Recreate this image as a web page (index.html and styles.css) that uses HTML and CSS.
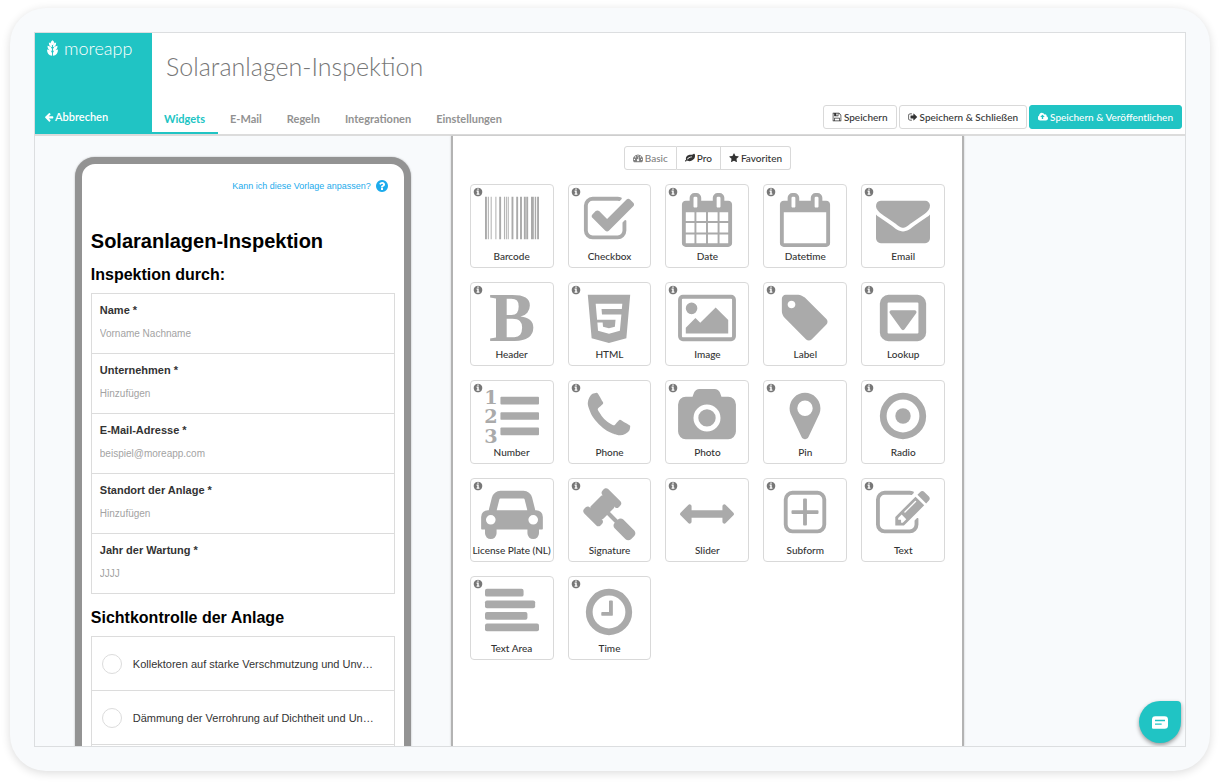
FILE: index.html
```html
<!DOCTYPE html>
<html lang="de">
<head>
<meta charset="utf-8">
<meta name="viewport" content="width=device-width, initial-scale=1">
<title>Solaranlagen-Inspektion</title>
<link rel="stylesheet" href="styles.css">
</head>
<body>
<svg class="defs" aria-hidden="true">
  <symbol id="info" viewBox="0 0 1792 1792"><path d="M1152 1376v-160q0-14-9-23t-23-9h-96v-512q0-14-9-23t-23-9h-320q-14 0-23 9t-9 23v160q0 14 9 23t23 9h96v320h-96q-14 0-23 9t-9 23v160q0 14 9 23t23 9h448q14 0 23-9t9-23zm-128-896v-160q0-14-9-23t-23-9h-192q-14 0-23 9t-9 23v160q0 14 9 23t23 9h192q14 0 23-9t9-23zm640 416q0 209-103 385.5t-279.5 279.5-385.5 103-385.5-103-279.5-279.5-103-385.5 103-385.5 279.5-279.5 385.5-103 385.5 103 279.5 279.5 103 385.5z"/></symbol>
</svg>
<div class="device">
  <div class="app">
    <header class="header">
      <div class="brand">
        <a class="logo" href="#">
          <svg class="logo-mark" viewBox="0 0 24 34" aria-hidden="true"><path d="M12 0c3 2 4 4 4 6s-2 4-4 5c-2-1-4-3-4-5s1-4 4-6zM4 5c4 1 7 3 7 8v2c-4 0-7-3-7-10zm16 0c-4 1-7 3-7 8v2c4 0 7-3 7-10zM1 12c6 1 10 4 10 9v2c-6 0-10-4-10-11zm22 0c-6 1-10 4-10 9v2c6 0 10-4 10-11zM0 20c7 1 11 4 11 9v5C4 33 0 28 0 20zm24 0c-7 1-11 4-11 9v5c7-1 11-6 11-14z"/></svg>
          <span>moreapp</span>
        </a>
        <a class="cancel" href="#">
          <svg viewBox="0 0 1792 1792" aria-hidden="true"><path d="M1664 896v128q0 53-32.5 90.5t-84.5 37.5h-704l293 294q38 36 38 90t-38 90l-75 76q-37 37-90 37-52 0-91-37l-651-652q-37-37-37-90 0-52 37-91l651-650q38-38 91-38 52 0 90 38l75 74q38 38 38 91t-38 91l-293 293h704q52 0 84.5 37.5t32.5 90.5z"/></svg>
          <span>Abbrechen</span>
        </a>
      </div>
      <div class="header-main">
        <h1 class="title">Solaranlagen-Inspektion</h1>
        <div class="header-row">
          <nav class="tabs">
            <a class="tab tab-active" href="#">Widgets</a>
            <a class="tab" href="#">E-Mail</a>
            <a class="tab" href="#">Regeln</a>
            <a class="tab" href="#">Integrationen</a>
            <a class="tab" href="#">Einstellungen</a>
          </nav>
          <div class="actions">
            <button class="btn" type="button"><svg class="icon" viewBox="0 0 1792 1792" aria-hidden="true"><path d="M512 1536h768v-384h-768v384zm896 0h128v-896q0-14-10-38.5t-20-34.5l-281-281q-10-10-34-20t-39-10v416q0 40-28 68t-68 28h-576q-40 0-68-28t-28-68v-416h-128v1280h128v-416q0-40 28-68t68-28h832q40 0 68 28t28 68v416zm-384-928v-320q0-13-9.5-22.5t-22.5-9.5h-192q-13 0-22.5 9.5t-9.5 22.5v320q0 13 9.5 22.5t22.5 9.5h192q13 0 22.5-9.5t9.5-22.5zm640 32v928q0 40-28 68t-68 28h-1344q-40 0-68-28t-28-68v-1344q0-40 28-68t68-28h928q40 0 88 20t76 48l280 280q28 28 48 76t20 88z"/></svg><span>Speichern</span></button>
            <button class="btn" type="button"><svg class="icon" viewBox="0 0 1792 1792" aria-hidden="true"><path d="M704 1440q0 4 1 20t.5 26.5-3 23.5-10 19.5-20.5 6.5h-320q-119 0-203.5-84.5t-84.5-203.5v-704q0-119 84.5-203.5t203.5-84.5h320q13 0 22.5 9.5t9.5 22.5q0 4 1 20t.5 26.5-3 23.5-10 19.5-20.5 6.5h-320q-66 0-113 47t-47 113v704q0 66 47 113t113 47h312l11.5 1 11.5 3 8 5.5 7 9 2 13.5zm928-544q0 26-19 45l-544 544q-19 19-45 19t-45-19-19-45v-288h-448q-26 0-45-19t-19-45v-384q0-26 19-45t45-19h448v-288q0-26 19-45t45-19 45 19l544 544q19 19 19 45z"/></svg><span>Speichern &amp; Schließen</span></button>
            <button class="btn btn-primary" type="button"><svg class="icon" viewBox="0 0 1856 1792" aria-hidden="true"><path d="M1216 864q0-14-9-23l-352-352q-9-9-23-9t-23 9l-351 351q-10 12-10 24 0 14 9 23t23 9h224v352q0 13 9.5 22.5t22.5 9.5h192q13 0 22.5-9.5t9.5-22.5v-352h224q13 0 22.5-9.5t9.5-22.5zm640 288q0 159-112.5 271.5t-271.5 112.5h-1088q-185 0-316.5-131.5t-131.5-316.5q0-130 70-240t188-165q-2-30-2-43 0-212 150-362t362-150q156 0 285.5 87t188.5 231q71-62 166-62 106 0 181 75t75 181q0 76-41 138 130 31 213.5 135.5t83.5 238.5z"/></svg><span>Speichern &amp; Veröffentlichen</span></button>
          </div>
        </div>
      </div>
    </header>

    <main class="workspace">
      <section class="preview">
        <form class="phone">
          <a class="help" href="#"><span>Kann ich diese Vorlage anpassen?</span>
            <svg viewBox="128 128 1536 1536" aria-hidden="true"><path d="M1024 1376v-192q0-14-9-23t-23-9h-192q-14 0-23 9t-9 23v192q0 14 9 23t23 9h192q14 0 23-9t9-23zm256-672q0-88-55.5-163t-138.5-116-170-41q-243 0-371 213-15 24 8 42l132 100q7 6 19 6 16 0 25-12 53-68 86-92 34-24 86-24 48 0 85.5 26t37.5 59q0 38-20 61t-68 45q-63 28-115.5 86.5t-52.5 125.5v36q0 14 9 23t23 9h192q14 0 23-9t9-23q0-19 21.5-49.5t54.5-49.5q32-18 49-28.5t46-35 44.5-48 28-60.5 12.5-81zm384 192q0 209-103 385.5t-279.5 279.5-385.5 103-385.5-103-279.5-279.5-103-385.5 103-385.5 279.5-279.5 385.5-103 385.5 103 279.5 279.5 103 385.5z"/></svg>
          </a>
          <h2 class="form-title">Solaranlagen-Inspektion</h2>
          <h3 class="form-section">Inspektion durch:</h3>
          <div class="fields">
            <div class="field"><label for="name">Name *</label><input id="name" type="text" placeholder="Vorname Nachname"></div>
            <div class="field"><label for="firm">Unternehmen *</label><input id="firm" type="text" placeholder="Hinzufügen"></div>
            <div class="field"><label for="mail">E-Mail-Adresse *</label><input id="mail" type="email" placeholder="beispiel@moreapp.com"></div>
            <div class="field"><label for="site">Standort der Anlage *</label><input id="site" type="text" placeholder="Hinzufügen"></div>
            <div class="field"><label for="year">Jahr der Wartung *</label><input id="year" type="text" placeholder="JJJJ"></div>
          </div>
          <h3 class="form-section">Sichtkontrolle der Anlage</h3>
          <div class="fields">
            <label class="check"><input type="checkbox"><span>Kollektoren auf starke Verschmutzung und Unv…</span></label>
            <label class="check"><input type="checkbox"><span>Dämmung der Verrohrung auf Dichtheit und Un…</span></label>
            <label class="check"><input type="checkbox"></label>
          </div>
        </form>
      </section>

      <section class="palette">
        <div class="segments">
          <button class="segment segment-active" type="button"><svg class="icon" viewBox="0 0 1792 1792" aria-hidden="true"><path fill-rule="evenodd" d="M896 256a896 896 0 0 0-757 1376q18 32 53 32h1408q35 0 53-32A896 896 0 0 0 896 256zM256 1024a120 120 0 1 1 0 240 120 120 0 1 1 0-240zM448 576a120 120 0 1 1 0 240 120 120 0 1 1 0-240zM896 384a120 120 0 1 1 0 240 120 120 0 1 1 0-240zM1344 576a120 120 0 1 1 0 240 120 120 0 1 1 0-240zM1536 1024a120 120 0 1 1 0 240 120 120 0 1 1 0-240zM1004 703l90 24-101 382a190 190 0 1 1-90-24z"/></svg><span>Basic</span></button>
          <button class="segment" type="button"><svg class="icon" viewBox="0 0 1792 1792" aria-hidden="true"><path d="M1280 704q0-26-19-45t-45-19q-172 0-318 49.5t-259.5 134-235.5 219.5q-19 21-19 45 0 26 19 45t45 19q24 0 45-19 27-24 74-71t67-66q137-124 268.5-176t313.5-52q26 0 45-19t19-45zm512-198q0 95-20 193-46 224-184.5 383t-357.5 268q-214 108-438 108-148 0-286-47-15-5-88-42t-96-37q-16 0-39.5 32t-45 70-52.5 70-60 32q-43 0-63.5-17.5t-45.5-59.5q-2-4-6-11t-5.5-10-3-9.5-1.5-13.5q0-35 31-73.5t68-65.5 68-56 31-48q0-4-14-38t-16-44q-9-51-9-104 0-115 43.5-220t119-184.5 170.5-139 204-95.5q55-18 145-25.5t179.5-9 178.5-6 163.5-24 113.5-56.5l29.5-29.5 29.5-28 27-20 36.5-16 43.5-4.5q39 0 70.5 46t47.5 112 24 124 8 96z"/></svg><span>Pro</span></button>
          <button class="segment" type="button"><svg class="icon" viewBox="0 0 1792 1792" aria-hidden="true"><path d="M1728 647q0 22-26 48l-363 354 86 500q1 7 1 20 0 21-10.5 35.5t-30.5 14.5q-19 0-40-12l-449-236-449 236q-22 12-40 12-21 0-31.5-14.5t-10.5-35.5q0-6 2-20l86-500-364-354q-25-27-25-48 0-37 56-46l502-73 225-455q19-41 49-41t49 41l225 455 502 73q56 9 56 46z"/></svg><span>Favoriten</span></button>
        </div>

        <div class="widgets">
          <button class="widget" type="button"><svg class="info" aria-hidden="true"><use href="#info"/></svg><svg class="glyph" viewBox="0 0 1792 1792" aria-hidden="true"><path d="M0 128h63v1408H0zM94 128h32v1408H94zM189 128h31v1408h-31zM346 128h31v1408h-31zM471 128h63v1408h-63zM629 128h31v1408h-31zM692 128h31v1408h-31zM755 128h31v1408h-31zM880 128h63v1408h-63zM1036 128h63v1408h-63zM1163 128h63v1408h-63zM1290 128h63v1408h-63zM1369 128h63v1408h-63zM1526 128h94v1408h-94zM1651 128h47v1408h-47zM1729 128h63v1408h-63z"/></svg><span>Barcode</span></button>
          <button class="widget" type="button"><svg class="info" aria-hidden="true"><use href="#info"/></svg><svg class="glyph" viewBox="0 0 1792 1792" aria-hidden="true"><path d="M1472 930v318q0 119-84.5 203.5t-203.5 84.5h-832q-119 0-203.5-84.5t-84.5-203.5v-832q0-119 84.5-203.5t203.5-84.5h832q63 0 117 25 15 7 18 23 3 17-9 29l-49 49q-10 10-23 10-3 0-9-2-23-6-45-6h-832q-66 0-113 47t-47 113v832q0 66 47 113t113 47h832q66 0 113-47t47-113v-254q0-13 9-22l64-64q10-10 23-10 6 0 12 3 20 8 20 29zm231-489l-814 814q-24 24-57 24t-57-24l-430-430q-24-24-24-57t24-57l110-110q24-24 57-24t57 24l263 263 647-647q24-24 57-24t57 24l110 110q24 24 24 57t-24 57z"/></svg><span>Checkbox</span></button>
          <button class="widget" type="button"><svg class="info" aria-hidden="true"><use href="#info"/></svg><svg class="glyph" viewBox="0 0 1792 1792" aria-hidden="true"><path d="M192 1664h288v-288h-288v288zm352 0h320v-288h-320v288zm-352-352h288v-320h-288v320zm352 0h320v-320h-320v320zm-352-384h288v-288h-288v288zm736 736h320v-288h-320v288zm-384-736h320v-288h-320v288zm768 736h288v-288h-288v288zm-384-352h320v-320h-320v320zm-352-864v-288q0-13-9.5-22.5t-22.5-9.5h-64q-13 0-22.5 9.5t-9.5 22.5v288q0 13 9.5 22.5t22.5 9.5h64q13 0 22.5-9.5t9.5-22.5zm736 864h288v-320h-288v320zm-384-384h320v-288h-320v288zm384 0h288v-288h-288v288zm32-480v-288q0-13-9.5-22.5t-22.5-9.5h-64q-13 0-22.5 9.5t-9.5 22.5v288q0 13 9.5 22.5t22.5 9.5h64q13 0 22.5-9.5t9.5-22.5zm384-64v1280q0 52-38 90t-90 38h-1408q-52 0-90-38t-38-90v-1280q0-52 38-90t90-38h128v-96q0-66 47-113t113-47h64q66 0 113 47t47 113v96h384v-96q0-66 47-113t113-47h64q66 0 113 47t47 113v96h128q52 0 90 38t38 90z"/></svg><span>Date</span></button>
          <button class="widget" type="button"><svg class="info" aria-hidden="true"><use href="#info"/></svg><svg class="glyph" viewBox="0 0 1792 1792" aria-hidden="true"><path fill-rule="evenodd" d="M192 1664h1408v-1024h-1408zM576 448v-288q0-13-9.5-22.5t-22.5-9.5h-64q-13 0-22.5 9.5t-9.5 22.5v288q0 13 9.5 22.5t22.5 9.5h64q13 0 22.5-9.5t9.5-22.5zM1344 448v-288q0-13-9.5-22.5t-22.5-9.5h-64q-13 0-22.5 9.5t-9.5 22.5v288q0 13 9.5 22.5t22.5 9.5h64q13 0 22.5-9.5t9.5-22.5zM1728 384v1280q0 52-38 90t-90 38h-1408q-52 0-90-38t-38-90v-1280q0-52 38-90t90-38h128v-96q0-66 47-113t113-47h64q66 0 113 47t47 113v96h384v-96q0-66 47-113t113-47h64q66 0 113 47t47 113v96h128q52 0 90 38t38 90z"/></svg><span>Datetime</span></button>
          <button class="widget" type="button"><svg class="info" aria-hidden="true"><use href="#info"/></svg><svg class="glyph" viewBox="0 0 1792 1792" aria-hidden="true"><path d="M1792 710v794q0 66-47 113t-113 47h-1472q-66 0-113-47t-47-113v-794q44 49 101 87 362 246 497 345 57 42 92.5 65.5t94.5 48 110 24.5h2q51 0 110-24.5t94.5-48 92.5-65.5q170-123 498-345 57-39 100-87zm0-294q0 79-49 151t-122 123q-376 261-468 325-10 7-42.5 31t-54 38.5-52 32.5-57.5 27-50 9h-2q-23 0-50-9t-57.5-27-52-32.5-54-38.5-42.5-31q-91-64-262-182.5t-205-142.5q-62-42-117-115.5t-55-136.5q0-78 41.5-130t118.5-52h1472q65 0 112.5 47t47.5 113z"/></svg><span>Email</span></button>

          <button class="widget" type="button"><svg class="info" aria-hidden="true"><use href="#info"/></svg><svg class="glyph" viewBox="0 0 1792 1792" aria-hidden="true"><text class="glyph-letter" x="896" y="1648" text-anchor="middle">B</text></svg><span>Header</span></button>
          <button class="widget" type="button"><svg class="info" aria-hidden="true"><use href="#info"/></svg><svg class="glyph" viewBox="-192 0 1792 1792" aria-hidden="true"><path d="M1130 597l16-175h-884l47 534h612l-22 228-197 53-196-53-13-140h-175l22 278 362 100h4v-1l359-99 50-544h-644l-15-181h674zm-1130-469h1408l-128 1438-578 162-574-162z"/></svg><span>HTML</span></button>
          <button class="widget" type="button"><svg class="info" aria-hidden="true"><use href="#info"/></svg><svg class="glyph glyph-wide" viewBox="0 0 1920 1792" aria-hidden="true"><path d="M640 576q0 80-56 136t-136 56-136-56-56-136 56-136 136-56 136 56 56 136zm1024 384v448h-1408v-192l320-320 160 160 512-512zm96-704h-1600q-13 0-22.5 9.5t-9.5 22.5v1216q0 13 9.5 22.5t22.5 9.5h1600q13 0 22.5-9.5t9.5-22.5v-1216q0-13-9.5-22.5t-22.5-9.5zm160 32v1216q0 66-47 113t-113 47h-1600q-66 0-113-47t-47-113v-1216q0-66 47-113t113-47h1600q66 0 113 47t47 113z"/></svg><span>Image</span></button>
          <button class="widget" type="button"><svg class="info" aria-hidden="true"><use href="#info"/></svg><svg class="glyph" viewBox="0 0 1792 1792" aria-hidden="true"><path d="M576 448q0-53-37.5-90.5t-90.5-37.5-90.5 37.5-37.5 90.5 37.5 90.5 90.5 37.5 90.5-37.5 37.5-90.5zm1067 576q0 53-37 90l-491 492q-39 37-91 37-53 0-90-37l-715-716q-38-37-64.5-101t-26.5-117v-416q0-52 38-90t90-38h416q53 0 117 26.5t102 64.5l715 714q37 39 37 91z"/></svg><span>Label</span></button>
          <button class="widget" type="button"><svg class="info" aria-hidden="true"><use href="#info"/></svg><svg class="glyph" viewBox="0 0 1792 1792" aria-hidden="true"><path d="M1337 675q18 35-5 66l-384 532q-19 27-52 27t-52-27l-384-532q-23-31-5-66 17-35 57-35h768q40 0 57 35z"/><path fill-rule="evenodd" d="M416 128h960q119 0 203.500 84.500t84.500 203.500v960q0 119-84.500 203.500t-203.500 84.500h-960q-119 0-203.500-84.500t-84.500-203.500v-960q0-119 84.500-203.500t203.500-84.500zm0 256q-32 0-32 32v960q0 32 32 32h960q32 0 32-32v-960q0-32-32-32z"/></svg><span>Lookup</span></button>

          <button class="widget" type="button"><svg class="info" aria-hidden="true"><use href="#info"/></svg><svg class="glyph" viewBox="0 0 1792 1792" aria-hidden="true"><g class="glyph-digits" text-anchor="middle"><text x="200" y="508">1</text><text x="200" y="1144">2</text><text x="200" y="1776">3</text></g><rect x="512" y="256" width="1280" height="256" rx="32"/><rect x="512" y="768" width="1280" height="256" rx="32"/><rect x="512" y="1280" width="1280" height="256" rx="32"/></svg><span>Number</span></button>
          <button class="widget" type="button"><svg class="info" aria-hidden="true"><use href="#info"/></svg><svg class="glyph" viewBox="0 0 1792 1792" aria-hidden="true"><path d="M1600 1240q0 27-10 70.5t-21 68.500q-21 50-122 106-94 51-186 51-27 0-52.500-3.500t-57.500-12.500-47.500-14.500-55.500-20.500-49-18q-98-35-175-83-128-79-264.500-215.500t-215.500-264.500q-48-77-83-175-3-9-18-49t-20.500-55.500-14.500-47.500-12.500-57.500-3.500-52.500q0-92 51-186 56-101 106-122 25-11 68.500-21t70.500-10q14 0 21 3 18 6 53 76 11 19 30 54t35 63.500 31 53.500q3 4 17.500 25t21.500 35.500 7 28.500q0 20-28.500 50t-62 55-62 53-28.500 46q0 9 5 22.500t8.500 20.500 14 24 11.500 19q76 137 174 235t235 174q2 1 19 11.500t24 14 20.500 8.500 22.500 5q18 0 46-28.500t53-62 55-62 50-28.500q14 0 28.500 7t35.500 21.500 25 17.500q25 15 53.500 31t63.500 35 54 30q70 35 76 53 3 7 3 21z"/></svg><span>Phone</span></button>
          <button class="widget" type="button"><svg class="info" aria-hidden="true"><use href="#info"/></svg><svg class="glyph glyph-wide" viewBox="0 0 1920 1792" aria-hidden="true"><path d="M960 672q119 0 203.500 84.500t84.500 203.500-84.500 203.500-203.500 84.500-203.500-84.500-84.500-203.500 84.500-203.500 203.500-84.500zm704-416q106 0 181 75t75 181v896q0 106-75 181t-181 75h-1408q-106 0-181-75t-75-181v-896q0-106 75-181t181-75h224l51-136q19-49 69.500-84.500t103.500-35.500h512q53 0 103.500 35.500t69.500 84.500l51 136h224zm-704 1152q185 0 316.500-131.500t131.500-316.500-131.500-316.500-316.500-131.500-316.500 131.500-131.500 316.500 131.500 316.500 316.500 131.500z"/></svg><span>Photo</span></button>
          <button class="widget" type="button"><svg class="info" aria-hidden="true"><use href="#info"/></svg><svg class="glyph" viewBox="0 0 1792 1792" aria-hidden="true"><path d="M1152 640q0-106-75-181t-181-75-181 75-75 181 75 181 181 75 181-75 75-181zm256 0q0 109-33 179l-364 774q-16 33-47.500 52t-67.500 19-67.500-19-46.500-52l-365-774q-33-70-33-179 0-212 150-362t362-150 362 150 150 362z"/></svg><span>Pin</span></button>
          <button class="widget" type="button"><svg class="info" aria-hidden="true"><use href="#info"/></svg><svg class="glyph" viewBox="0 0 1792 1792" aria-hidden="true"><circle class="ring" cx="896" cy="896" r="656"/><circle cx="896" cy="896" r="256"/></svg><span>Radio</span></button>

          <button class="widget" type="button"><svg class="info" aria-hidden="true"><use href="#info"/></svg><svg class="glyph glyph-car" viewBox="0 0 2048 1792" aria-hidden="true"><path d="M480 1088q0-66-47-113t-113-47-113 47-47 113 47 113 113 47 113-47 47-113zm36-320h1016l-89-357q-2-8-14-17.500t-21-9.500h-768q-9 0-21 9.500t-14 17.500zm1372 320q0-66-47-113t-113-47-113 47-47 113 47 113 113 47 113-47 47-113zm160-96v384q0 14-9 23t-23 9h-96v128q0 80-56 136t-136 56-136-56-56-136v-128h-1024v128q0 80-56 136t-136 56-136-56-56-136v-128h-96q-14 0-23-9t-9-23v-384q0-93 65.500-158.500t158.500-65.500h28l105-419q23-94 104-157.500t179-63.500h768q98 0 179 63.500t104 157.500l105 419h28q93 0 158.500 65.500t65.500 158.500z"/></svg><span>License Plate (NL)</span></button>
          <button class="widget" type="button"><svg class="info" aria-hidden="true"><use href="#info"/></svg><svg class="glyph" viewBox="0 0 1792 1792" aria-hidden="true"><path d="M1771 1536q0 53-37 90l-107 108q-39 37-91 37-53 0-90-37l-363-364q-38-36-38-90 0-53 43-96l-256-256-126 126q-14 14-34 14t-34-14q2 2 12.500 12t12.500 13 10 11.500 10 13.500 6 13.500 5.500 16.500 1.500 18q0 38-28 68-3 3-16.500 18t-19 20.500-18.500 16.500-22 15.500-22 9-26 4.500q-40 0-68-28l-408-408q-28-28-28-68 0-13 4.500-26t9-22 15.500-22 16.500-18.500 20.500-19 18-16.500q30-28 68-28 10 0 18 1.500t16.500 5.500 13.500 6 13.500 10 11.500 10 13 12.500 12 12.500q-14-14-14-34t14-34l348-348q14-14 34-14t34 14q-2-2-12.500-12t-12.500-13-10-11.500-10-13.500-6-13.500-5.500-16.500-1.500-18q0-38 28-68 3-3 16.500-18t19-20.500 18.500-16.500 22-15.500 22-9 26-4.500q40 0 68 28l408 408q28 28 28 68 0 13-4.500 26t-9 22-15.500 22-16.500 18.500-20.500 19-18 16.500q-30 28-68 28-10 0-18-1.500t-16.500-5.500-13.500-6-13.500-10-11.500-10-13-12.500-12-12.500q14 14 14 34t-14 34l-126 126 256 256q43-43 96-43 52 0 91 37l363 363q37 39 37 91z"/></svg><span>Signature</span></button>
          <button class="widget" type="button"><svg class="info" aria-hidden="true"><use href="#info"/></svg><svg class="glyph" viewBox="0 0 1792 1792" aria-hidden="true"><path d="M1792 896q0 26-19 45l-256 256q-19 19-45 19t-45-19-19-45v-128h-1024v128q0 26-19 45t-45 19-45-19l-256-256q-19-19-19-45t19-45l256-256q19-19 45-19t45 19 19 45v128h1024v-128q0-26 19-45t45-19 45 19l256 256q19 19 19 45z"/></svg><span>Slider</span></button>
          <button class="widget" type="button"><svg class="info" aria-hidden="true"><use href="#info"/></svg><svg class="glyph" viewBox="0 0 1792 1792" aria-hidden="true"><rect class="outline" x="256" y="192" width="1280" height="1280" rx="224"/><rect x="448" y="768" width="896" height="128" rx="32"/><rect x="832" y="384" width="128" height="896" rx="32"/></svg><span>Subform</span></button>
          <button class="widget" type="button"><svg class="info" aria-hidden="true"><use href="#info"/></svg><svg class="glyph" viewBox="0 0 1792 1792" aria-hidden="true"><path d="M888 1184l116-116-152-152-116 116v56h96v96h56zm440-720q-16-16-33 1l-350 350q-17 17-1 33t33-1l350-350q17-17 1-33zm80 594v190q0 119-84.500 203.500t-203.500 84.500h-832q-119 0-203.500-84.500t-84.500-203.500v-832q0-119 84.500-203.500t203.500-84.500h832q63 0 117 25 15 7 18 23 3 17-9 29l-49 49q-14 14-32 8-23-6-45-6h-832q-66 0-113 47t-47 113v832q0 66 47 113t113 47h832q66 0 113-47t47-113v-126q0-13 9-22l64-64q15-15 35-7t20 29zm-96-738l288 288-672 672h-288v-288zm444 132l-92 92-288-288 92-92q28-28 68-28t68 28l152 152q28 28 28 68t-28 68z"/></svg><span>Text</span></button>

          <button class="widget" type="button"><svg class="info" aria-hidden="true"><use href="#info"/></svg><svg class="glyph" viewBox="0 0 1792 1792" aria-hidden="true"><rect y="128" width="1280" height="256" rx="64"/><rect y="512" width="1664" height="256" rx="64"/><rect y="896" width="1408" height="256" rx="64"/><rect y="1280" width="1792" height="256" rx="64"/></svg><span>Text Area</span></button>
          <button class="widget" type="button"><svg class="info" aria-hidden="true"><use href="#info"/></svg><svg class="glyph" viewBox="0 0 1792 1792" aria-hidden="true"><circle class="ring" cx="896" cy="896" r="656"/><path d="M1024 544v448q0 14-9 23t-23 9h-320q-14 0-23-9t-9-23v-64q0-14 9-23t23-9h224v-352q0-14 9-23t23-9h64q14 0 23 9t9 23z"/></svg><span>Time</span></button>
        </div>
      </section>
    </main>

    <button class="chat" type="button" aria-label="Chat">
      <svg viewBox="0 0 48 38" aria-hidden="true"><path fill-rule="evenodd" d="M10 0h28q10 0 10 10v18q0 10-10 10H3q-3 0-3-3V10Q0 0 10 0zM9 11v4h30v-4zM9 22v4h20v-4z"/></svg>
    </button>
  </div>
</div>
</body>
</html>
```
FILE: styles.css
```css
* {
  box-sizing: border-box;
}

body {
  margin: 0;
  padding: 8px 10px 12px;
  height: 100vh;
  background: #fff;
  color: #333;
  font-family: Lato, "Liberation Sans", sans-serif;
}

button,
input {
  font-family: inherit;
}

a {
  text-decoration: none;
}

svg {
  flex: none;
  fill: currentColor;
}

.defs {
  position: absolute;
  width: 0;
  height: 0;
}

.device {
  height: 100%;
  padding: 24px;
  border-radius: 36px;
  background: #f8fafc;
  box-shadow: 0 2px 10px rgba(0, 0, 0, 0.14);
}

.app {
  position: relative;
  display: flex;
  flex-direction: column;
  height: 100%;
  overflow: hidden;
  border: 1px solid #dcdee0;
}

/* Header */

.header {
  display: flex;
  flex: none;
  border-bottom: 2px solid #dcdcdc;
  background: #fff;
}

.brand {
  display: flex;
  flex: none;
  flex-direction: column;
  justify-content: space-between;
  width: 117px;
  padding: 4px 9px 9px;
  background: #20c4c4;
}

.logo {
  display: flex;
  align-items: center;
  gap: 6px;
  padding-left: 3px;
  color: #fff;
  font-size: 18px;
  font-weight: 300;
  line-height: 22px;
}

.logo-mark {
  width: 11px;
  height: 16px;
}

.cancel {
  display: flex;
  align-items: center;
  gap: 1px;
  color: #fff;
  font-size: 11px;
  font-weight: 600;
  line-height: 16px;
}

.cancel svg {
  width: 10px;
  height: 10px;
}

.header-main {
  display: flex;
  flex: 1;
  flex-direction: column;
  min-width: 0;
}

.title {
  margin: 0;
  padding: 16px 14px 13px;
  color: #777;
  font-size: 25px;
  font-weight: 300;
  line-height: 34px;
}

.header-row {
  display: flex;
  justify-content: space-between;
}

.tabs {
  display: flex;
}

.tab {
  padding: 16px 13px 6px 12px;
  border-bottom: 2px solid transparent;
  color: #929292;
  font-size: 11px;
  font-weight: 700;
  line-height: 14px;
}

.tab-active {
  border-bottom-color: #20c4c4;
  color: #20c4c4;
}

.actions {
  display: flex;
  align-items: flex-end;
  gap: 2px;
  padding-right: 3px;
  padding-bottom: 5px;
}

.btn {
  display: flex;
  align-items: center;
  gap: 2px;
  height: 24px;
  padding: 0 8px;
  border: 1px solid #d9d9d9;
  border-radius: 3px;
  background: #fff;
  color: #333;
  font-size: 10px;
  font-weight: 500;
}

.btn-primary {
  border-color: #20c4c4;
  background: #20c4c4;
  color: #fff;
}

.icon {
  width: 10px;
  height: 10px;
}

/* Workspace */

.workspace {
  display: grid;
  flex: 1;
  grid-template-columns: 416fr 514fr 221fr;
  min-height: 0;
}

.preview {
  display: flex;
  justify-content: center;
  min-height: 0;
  overflow: hidden;
  padding: 21px 16px 0;
}

.phone {
  flex: 0 1 336px;
  min-width: 0;
  height: max-content;
  padding: 14px 9px 40px;
  border: 7px solid #939393;
  border-radius: 20px;
  background: #fff;
  box-shadow: 0 0 2px rgba(0, 0, 0, 0.3);
  font-family: "Liberation Sans", sans-serif;
}

.help {
  display: flex;
  align-items: center;
  justify-content: flex-end;
  gap: 5px;
  padding-right: 7px;
  color: #1cabec;
  font-size: 9px;
  line-height: 16px;
}

.help svg {
  width: 12px;
  height: 12px;
}

.form-title {
  margin: 33px 0 0;
  color: #000;
  font-size: 20px;
  font-weight: 700;
  line-height: 28px;
}

.form-section {
  margin: 10px 0 8px;
  color: #000;
  font-size: 16px;
  font-weight: 700;
  line-height: 20px;
}

.fields + .form-section {
  margin-top: 14px;
}

.fields {
  border: 1px solid #dcdcdc;
  border-bottom: 0;
}

.field {
  display: flex;
  flex-direction: column;
  gap: 8px;
  height: 60px;
  padding: 8px;
}

.field,
.check {
  border-bottom: 1px solid #dcdcdc;
}

.field label {
  color: #333;
  font-size: 11px;
  font-weight: 700;
  line-height: 16px;
}

.field input {
  padding: 0;
  border: 0;
  outline: 0;
  background: none;
  color: #333;
  font-size: 10px;
  line-height: 16px;
}

.field input::placeholder {
  color: #a3a3a3;
}

.check {
  display: flex;
  align-items: center;
  gap: 11px;
  height: 54px;
  padding: 0 10px;
  color: #333;
  font-size: 11px;
  white-space: nowrap;
}

.check input {
  flex: none;
  width: 20px;
  height: 20px;
  margin: 0;
  border: 1px solid #dcdcdc;
  border-radius: 50%;
  appearance: none;
}

/* Widget palette */

.palette {
  min-width: 0;
  overflow: hidden;
  padding: 10px 17px 0;
  border: solid #b3b3b3;
  border-width: 0 2px;
  background: #fff;
  box-shadow: 0 0 2px rgba(0, 0, 0, 0.2);
}

.segments {
  display: flex;
  justify-content: center;
}

.segment {
  display: flex;
  align-items: center;
  gap: 2px;
  height: 24px;
  padding: 0 8px;
  border: 1px solid #d9d9d9;
  background: #fff;
  color: #333;
  font-size: 10px;
  font-weight: 500;
}

.segment + .segment {
  border-left: 0;
}

.segment:first-child {
  border-radius: 3px 0 0 3px;
}

.segment:last-child {
  border-radius: 0 3px 3px 0;
}

.segment-active {
  color: #808080;
}

.widgets {
  display: grid;
  grid-template-columns: repeat(5, 1fr);
  gap: 14px;
  padding-top: 14px;
}

.widget {
  position: relative;
  display: flex;
  flex-direction: column;
  align-items: center;
  gap: 2px;
  min-width: 0;
  aspect-ratio: 1;
  padding: 8px 0 0;
  border: 1px solid #d9d9d9;
  border-radius: 4px;
  background: #fff;
  color: #333;
  font-size: 10px;
  font-weight: 500;
  line-height: 14px;
  white-space: nowrap;
}

.info {
  position: absolute;
  top: 2px;
  left: 2px;
  width: 10px;
  height: 10px;
  color: #777;
}

.glyph {
  width: 54px;
  height: 54px;
  overflow: visible;
  color: #aaa;
}

.glyph-wide {
  width: 58px;
}

.glyph-car {
  width: 62px;
}

.glyph-letter {
  font-family: "Liberation Serif", serif;
  font-size: 2300px;
  font-weight: 700;
}

.glyph-digits {
  font-family: "DejaVu Serif", serif;
  font-size: 640px;
  font-weight: 700;
}

.ring,
.outline {
  fill: none;
  stroke: currentColor;
}

.ring {
  stroke-width: 224px;
}

.outline {
  stroke-width: 128px;
}

/* Chat launcher */

.chat {
  position: absolute;
  right: 4px;
  bottom: 3px;
  display: flex;
  align-items: center;
  justify-content: center;
  width: 42px;
  height: 42px;
  padding: 0;
  border: 0;
  border-radius: 50% 4px 50% 50%;
  background: #20c4c4;
  box-shadow: 0 2px 4px rgba(0, 0, 0, 0.4);
  color: #fff;
}

.chat svg {
  width: 16px;
  height: 13px;
}
```
